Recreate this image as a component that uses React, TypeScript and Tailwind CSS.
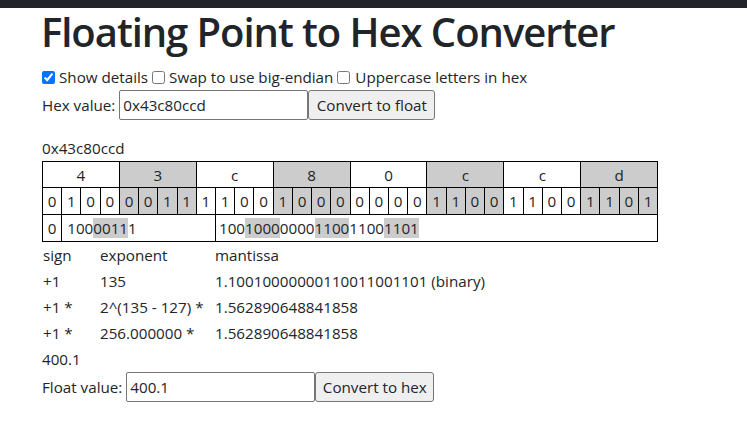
import React from "react";

const bits = "01000011110010000000110011001101";
const hex = ["4", "3", "c", "8", "0", "c", "c", "d"];
const gray = "bg-[#cccccc]";
const font = { fontFamily: '"Open Sans", "Noto Sans", sans-serif' };

function Seg({ parts }: { parts: [string, boolean][] }) {
  return (
    <>
      {parts.map(([t, g], i) => (
        <span key={i} className={g ? gray : ""}>
          {t}
        </span>
      ))}
    </>
  );
}

export default function App() {
  const cellW = 615 / 32;
  return (
    <div className="min-h-[429px] bg-white text-[#212529] text-[15.2px] leading-[24px]" style={font}>
      <div className="h-2 bg-[#212529]" />
      <div className="pl-[42px]">
        <h1 className="text-[40px] leading-[48px] font-semibold mb-2 tracking-[-1.05px] ml-[-1px]">
          Floating Point to Hex Converter
        </h1>
        <div className="flex items-center h-[26px]">
          <input type="checkbox" defaultChecked className="m-0 w-[13px] h-[13px] mr-[4px]" />
          <span>Show details</span>
          <input type="checkbox" className="m-0 w-[13px] h-[13px] ml-[4px] mr-[4px]" />
          <span>Swap to use big-endian</span>
          <input type="checkbox" className="m-0 w-[13px] h-[13px] ml-[4px] mr-[5px]" />
          <span>Uppercase letters in hex</span>
        </div>
        <div className="flex items-center h-[30px]">
          <span className="mr-[4px]">Hex value:</span>
          <input
            defaultValue="0x43c80ccd"
            className="w-[189px] h-[30px] border border-[#767676] rounded-[2px] px-[3px] outline-none"
            style={font}
          />
          <button className="w-[127px] h-[30px] bg-[#efefef] border border-[#767676] rounded-[3px] whitespace-nowrap">
            Convert to float
          </button>
        </div>
        <div className="h-4" />
        <div className="h-[24px] leading-[24px]">0x43c80ccd</div>
        <table className="border-collapse w-[615px] table-fixed mt-[1px]">
          <colgroup>
            {Array.from({ length: 32 }).map((_, i) => (
              <col key={i} style={{ width: cellW }} />
            ))}
          </colgroup>
          <tbody>
            <tr className="h-[26px]">
              {hex.map((h, i) => (
                <td
                  key={i}
                  colSpan={4}
                  className={`border border-black text-center p-0 ${i % 2 ? gray : ""}`}
                >
                  {h}
                </td>
              ))}
            </tr>
            <tr className="h-[27px]">
              {bits.split("").map((b, i) => (
                <td
                  key={i}
                  className={`border border-black text-center p-0 ${Math.floor(i / 4) % 2 ? gray : ""}`}
                >
                  {b}
                </td>
              ))}
            </tr>
            <tr className="h-[27px]">
              <td className="border border-black text-center p-0">0</td>
              <td colSpan={8} className="border border-black p-0 pl-[5px] whitespace-nowrap">
                <Seg parts={[["100", false], ["0011", true], ["1", false]]} />
              </td>
              <td colSpan={23} className="border border-black p-0 pl-[3px] whitespace-nowrap">
                <Seg
                  parts={[
                    ["100", false],
                    ["1000", true],
                    ["0000", false],
                    ["1100", true],
                    ["1100", false],
                    ["1101", true],
                  ]}
                />
              </td>
            </tr>
          </tbody>
        </table>
        <table className="mt-0">
          <tbody>
            <tr className="h-[26px]">
              <td className="w-[58px] p-0 pl-[1px]">sign</td>
              <td className="w-[115px] p-0">exponent</td>
              <td className="p-0">mantissa</td>
            </tr>
            <tr className="h-[26px]">
              <td className="p-0 pl-[1px]">+1</td>
              <td className="p-0">135</td>
              <td className="p-0">1.10010000000110011001101 (binary)</td>
            </tr>
            <tr className="h-[26px]">
              <td className="p-0 pl-[1px]">+1 *</td>
              <td className="p-0 whitespace-nowrap">2^(135 - 127) *</td>
              <td className="p-0">1.562890648841858</td>
            </tr>
            <tr className="h-[26px]">
              <td className="p-0 pl-[1px]">+1 *</td>
              <td className="p-0">256.000000 *</td>
              <td className="p-0">1.562890648841858</td>
            </tr>
          </tbody>
        </table>
        <div className="h-[26px] leading-[26px]">400.1</div>
        <div className="flex items-center h-[30px]">
          <span className="mr-[4px]">Float value:</span>
          <input
            defaultValue="400.1"
            className="w-[189px] h-[30px] border border-[#767676] rounded-[2px] px-[3px] outline-none"
            style={font}
          />
          <button className="w-[119px] h-[30px] bg-[#efefef] border border-[#767676] rounded-[3px] whitespace-nowrap">
            Convert to hex
          </button>
        </div>
      </div>
    </div>
  );
}
